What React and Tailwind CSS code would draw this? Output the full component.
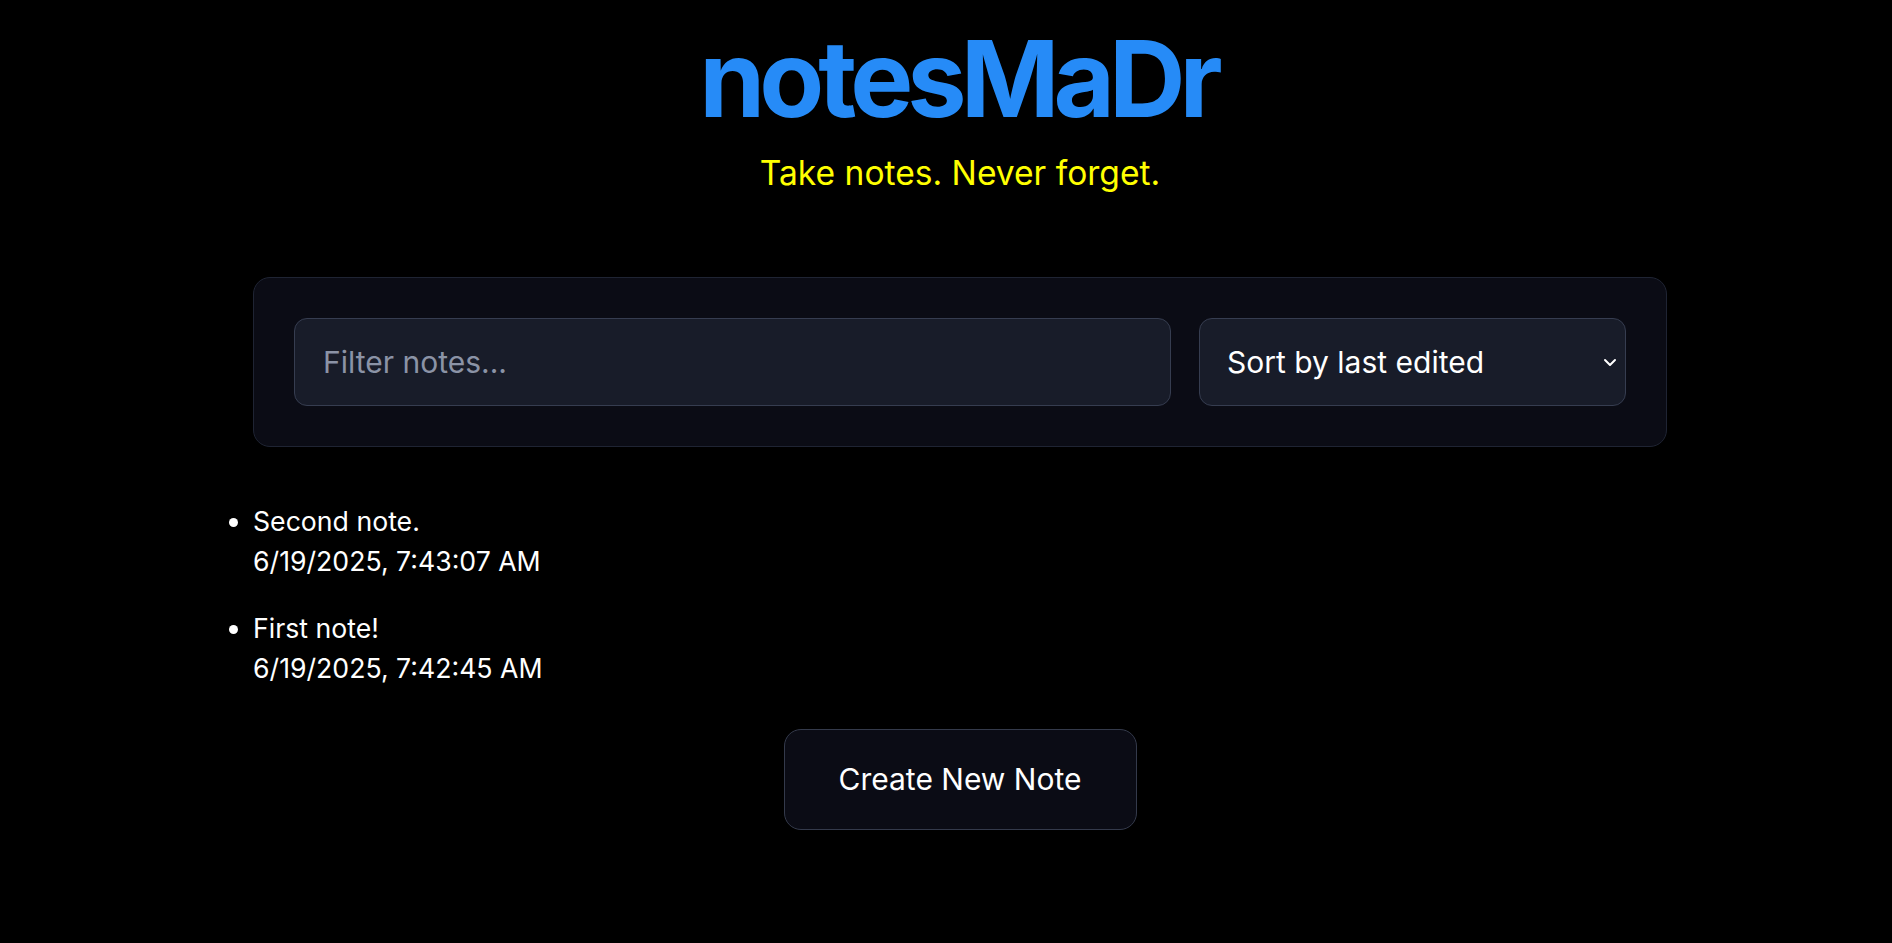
import React from "react";

const notes = [
  { text: "Second note.", date: "6/19/2025, 7:43:07 AM" },
  { text: "First note!", date: "6/19/2025, 7:42:45 AM" },
];

export default function App() {
  return (
    <div className="min-h-screen bg-black text-white pl-[28px] font-['Inter',_'Noto_Sans',_sans-serif]">
      <div className="flex flex-col items-center">
        <h1 className="mt-[20px] pr-[4px] text-[106px] leading-[118px] font-bold tracking-[-6px] text-[#268bf7]">
          notesMaDr
        </h1>
        <p className="mt-[15px] text-[33.6px] leading-[40px] text-[#ffff00]">
          Take notes. Never forget.
        </p>

        <div className="mt-[84px] w-[1414px] rounded-[17px] border border-[#1f2433] bg-[#0b0c15] p-[40px]">
          <div className="flex items-center gap-[28px]">
            <input
              type="text"
              placeholder="Filter notes..."
              className="h-[88px] flex-1 rounded-[13px] border border-[#363d50] bg-[#181c29] px-[28px] text-[30px] text-white outline-none placeholder:text-[#8b93a6]"
            />
            <div className="relative w-[427px]">
              <select className="h-[88px] w-full appearance-none rounded-[13px] border border-[#363d50] bg-[#181c29] px-[27px] text-[30px] text-white outline-none">
                <option>Sort by last edited</option>
                <option>Sort by created</option>
                <option>Sort alphabetically</option>
              </select>
              <svg
                className="pointer-events-none absolute right-[9px] top-1/2 -translate-y-1/2"
                width="14"
                height="10"
                viewBox="0 0 14 10"
                fill="none"
                stroke="white"
                strokeWidth="2"
                strokeLinecap="round"
                strokeLinejoin="round"
              >
                <path d="M2 3l5 5 5-5" />
              </svg>
            </div>
          </div>
        </div>

        <ul className="mt-[54px] w-[1414px] list-disc flex flex-col gap-[27px] text-[26.67px] leading-[40px]">
          {notes.map((n) => (
            <li key={n.date}>
              <div>{n.text}</div>
              <div>{n.date}</div>
            </li>
          ))}
        </ul>

        <button className="mt-[41px] flex h-[101px] w-[353px] items-center justify-center rounded-[17px] border border-[#343a4b] bg-[#0b0c15] text-[30px] text-white">
          Create New Note
        </button>
      </div>
    </div>
  );
}
